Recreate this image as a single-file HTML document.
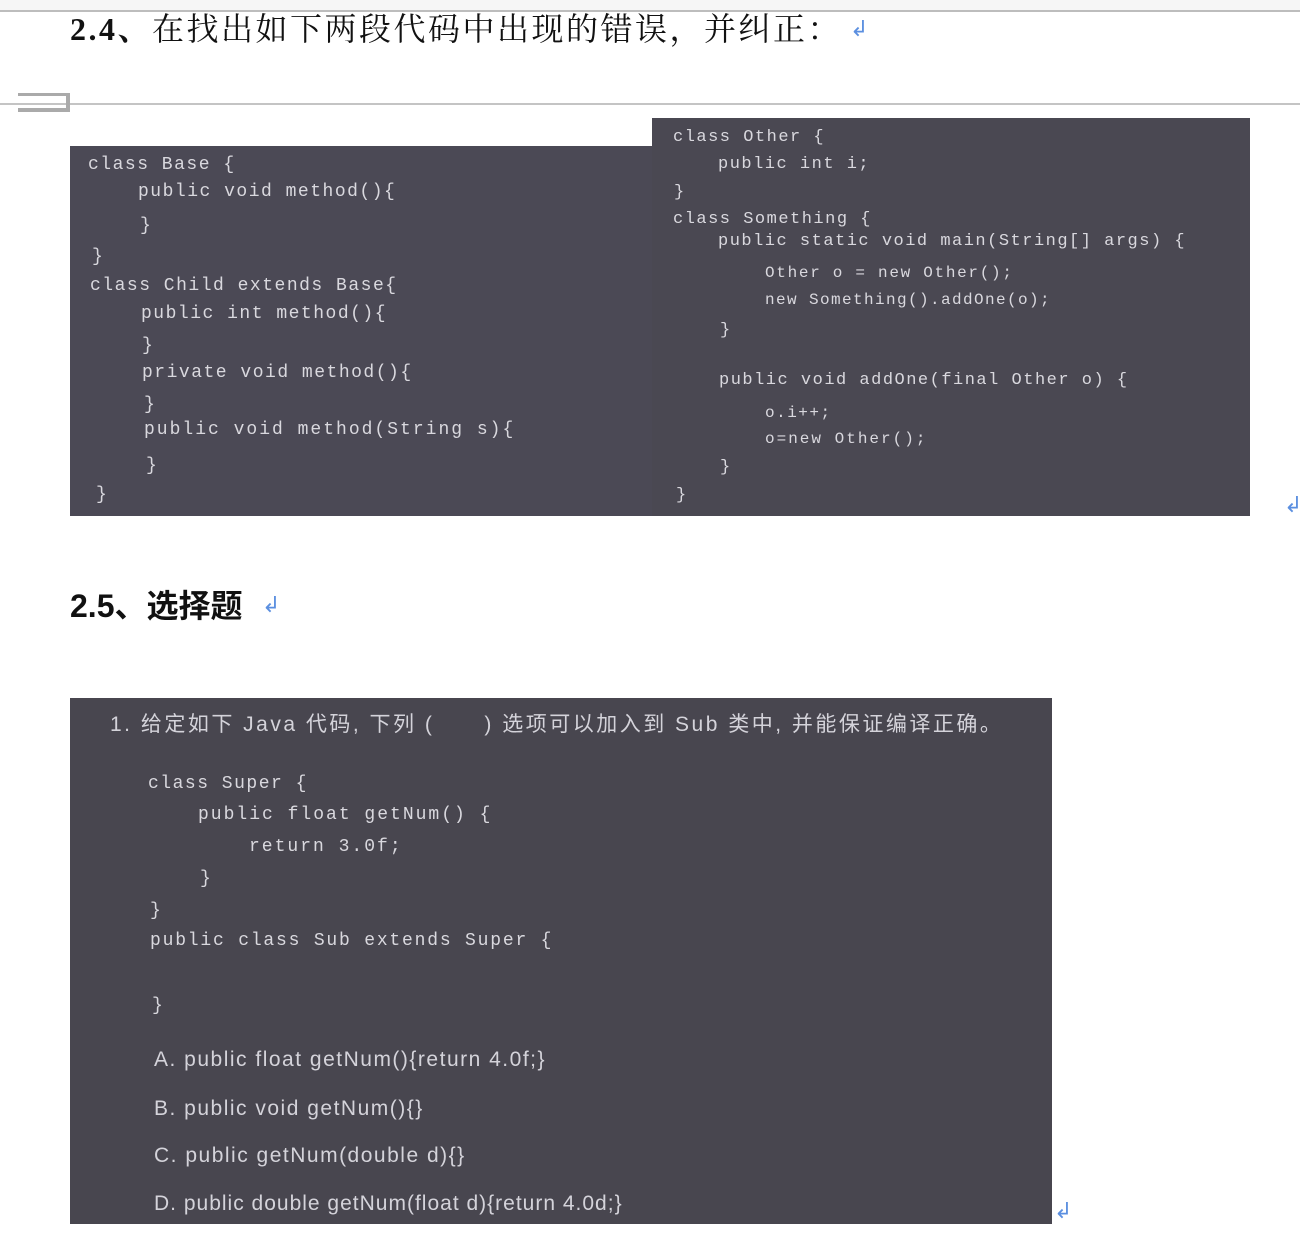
<!DOCTYPE html>
<html><head><meta charset="utf-8"><style>
body{margin:0;width:1300px;height:1238px;background:#fff;position:relative;overflow:hidden;font-family:"Liberation Sans","Noto Sans CJK SC",sans-serif}
.a{position:absolute;white-space:pre}
.box{position:absolute;background:#4a4853}
.c{position:absolute;white-space:pre;font-family:"Liberation Mono",monospace;color:#d9d8de;font-size:18px;line-height:22px;letter-spacing:1.5px}
.s{position:absolute;white-space:pre;font-family:"Liberation Sans","Noto Sans CJK SC",sans-serif;color:#d4d3da;font-size:21px;line-height:26px;letter-spacing:1.5px}
.ret{position:absolute;color:#5b8fe0;font-size:22px}
</style></head><body>
<div class="a" style="left:0;top:0;width:1300px;height:10px;background:#f6f6f6;border-bottom:2px solid #bdbdbd"></div>
<div class="a" style="left:70px;top:8px;font-family:'Liberation Serif','Noto Serif CJK SC',serif;font-size:32px;line-height:42px;color:#111;font-weight:bold;letter-spacing:2.5px">2.4、<span style="font-weight:normal">在找出如下两段代码中出现的错误，并纠正：</span></div>
<div class="ret" style="left:850px;top:16px">↲</div>
<div class="a" style="left:0;top:103px;width:1300px;height:2px;background:#c4c4c4"></div>
<div class="a" style="left:18px;top:93px;width:50px;height:3px;background:#aaa"></div>
<div class="a" style="left:18px;top:108px;width:52px;height:4px;background:#aaa"></div>
<div class="a" style="left:66px;top:93px;width:4px;height:18px;background:#aaa"></div>

<div class="box" style="left:70px;top:146px;width:582px;height:370px;background:#4b4955"></div>
<div class="box" style="left:652px;top:118px;width:598px;height:398px;background:#4a4852"></div>
<div class="c" style="left:88px;top:154px">class Base {</div>
<div class="c" style="left:138px;top:181px">public void method(){</div>
<div class="c" style="left:140px;top:215px">}</div>
<div class="c" style="left:92px;top:246px">}</div>
<div class="c" style="left:90px;top:275px">class Child extends Base{</div>
<div class="c" style="left:141px;top:303px">public int method(){</div>
<div class="c" style="left:142px;top:335px">}</div>
<div class="c" style="left:142px;top:362px">private void method(){</div>
<div class="c" style="left:144px;top:394px">}</div>
<div class="c" style="left:144px;top:419px;letter-spacing:2px">public void method(String s){</div>
<div class="c" style="left:146px;top:455px">}</div>
<div class="c" style="left:96px;top:484px">}</div>

<div class="c" style="left:673px;top:127px;font-size:17px">class Other {</div>
<div class="c" style="left:718px;top:154px;font-size:17px">public int i;</div>
<div class="c" style="left:674px;top:182px;font-size:17px">}</div>
<div class="c" style="left:673px;top:209px;font-size:17px">class Something {</div>
<div class="c" style="left:718px;top:231px;font-size:17px">public static void main(String[] args) {</div>
<div class="c" style="left:765px;top:262px;font-size:16px;letter-spacing:1.7px">Other o = new Other();</div>
<div class="c" style="left:765px;top:289px;font-size:16px;letter-spacing:1.4px">new Something().addOne(o);</div>
<div class="c" style="left:720px;top:320px;font-size:17px">}</div>
<div class="c" style="left:719px;top:370px;font-size:17px">public void addOne(final Other o) {</div>
<div class="c" style="left:765px;top:402px;font-size:16px">o.i++;</div>
<div class="c" style="left:765px;top:428px;font-size:16px;letter-spacing:2px">o=new Other();</div>
<div class="c" style="left:720px;top:457px;font-size:17px">}</div>
<div class="c" style="left:676px;top:485px;font-size:17px">}</div>
<div class="ret" style="left:1284px;top:492px">↲</div>

<div class="a" style="left:70px;top:585px;font-size:32px;line-height:42px;color:#111;font-weight:bold;letter-spacing:0px">2.5、选择题</div>
<div class="ret" style="left:262px;top:592px">↲</div>

<div class="box" style="left:70px;top:698px;width:982px;height:526px;background:#48464f"></div>
<div class="s" style="left:110px;top:712px;letter-spacing:2.5px">1. 给定如下 Java 代码, 下列 (&nbsp;&nbsp;&nbsp;&nbsp;&nbsp;&nbsp;) 选项可以加入到 Sub 类中, 并能保证编译正确。</div>
<div class="c" style="left:148px;top:773px">class Super {</div>
<div class="c" style="left:198px;top:804px;letter-spacing:2px">public float getNum() {</div>
<div class="c" style="left:249px;top:836px;letter-spacing:2px">return 3.0f;</div>
<div class="c" style="left:200px;top:868px">}</div>
<div class="c" style="left:150px;top:900px">}</div>
<div class="c" style="left:150px;top:930px;letter-spacing:1.8px">public class Sub extends Super {</div>
<div class="c" style="left:152px;top:995px">}</div>
<div class="s" style="left:154px;top:1047px;letter-spacing:1.5px">A. public float getNum(){return 4.0f;}</div>
<div class="s" style="left:154px;top:1096px;letter-spacing:1.5px">B. public void getNum(){}</div>
<div class="s" style="left:154px;top:1143px;letter-spacing:1.5px">C. public getNum(double d){}</div>
<div class="s" style="left:154px;top:1191px;letter-spacing:1px">D. public double getNum(float d){return 4.0d;}</div>
<div class="ret" style="left:1054px;top:1198px">↲</div>
</body></html>
